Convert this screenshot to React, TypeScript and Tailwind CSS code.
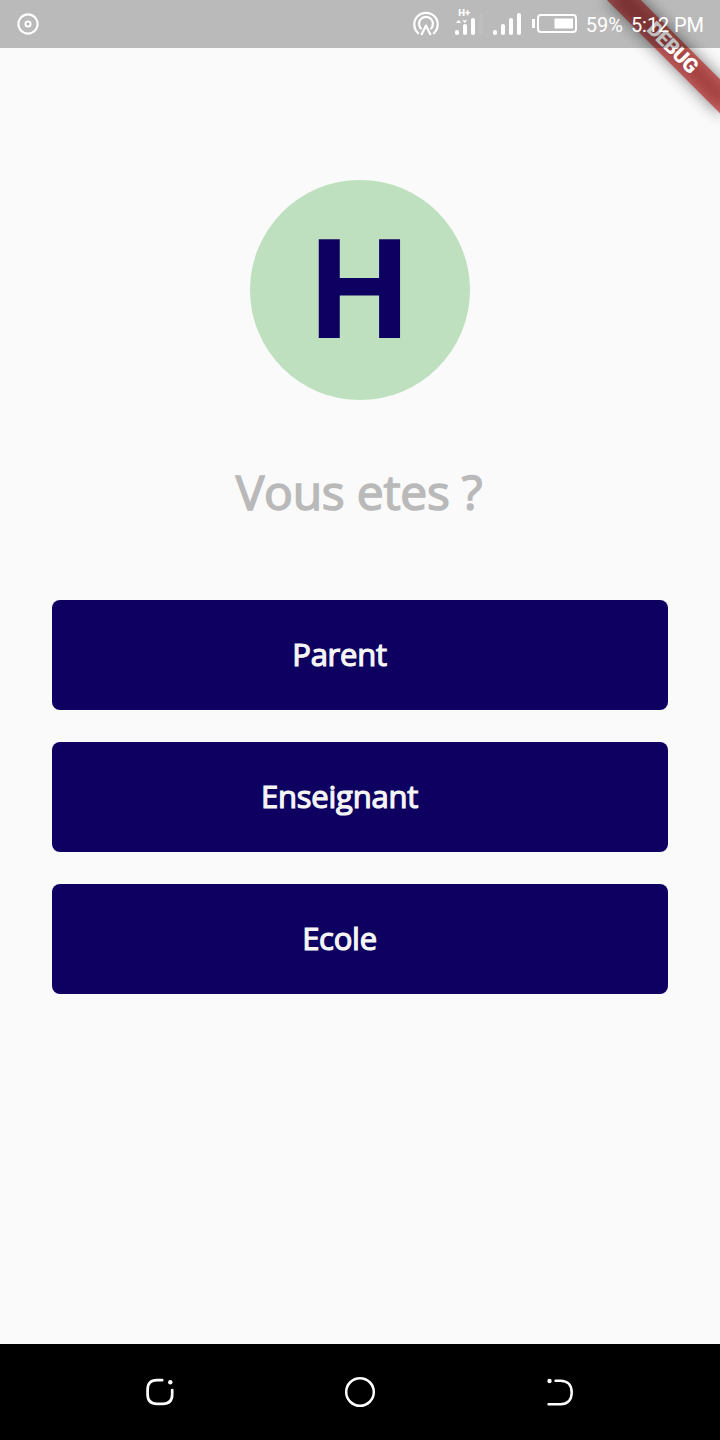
import React from "react";

const roles = [
  { label: "Parent", id: "parent" },
  { label: "Enseignant", id: "enseignant" },
  { label: "Ecole", id: "ecole" },
];

function DebugBanner() {
  return (
    <div className="pointer-events-none absolute top-0 right-0 h-40 w-40 overflow-hidden">
      <div className="absolute top-0 left-full h-0 w-0 origin-top-left rotate-45">
        <div className="absolute top-[56px] left-[-80px] h-6 w-40 bg-black/50 blur-[8px]" />
        <div className="absolute top-[56px] left-[-120px] h-6 w-60 bg-[#b71c1c]/63" />
        <div className="absolute top-[56px] left-[-80px] h-6 w-40 text-center font-[Roboto,sans-serif] text-[20.4px] leading-[23px] font-black tracking-[-0.6px] text-white">
          DEBUG
        </div>
      </div>
    </div>
  );
}

function RecordIcon() {
  return (
    <svg width="24" height="24" viewBox="0 0 24 24" fill="none" stroke="#fff">
      <circle cx="12" cy="12" r="9.6" strokeWidth="2.1" />
      <circle cx="12" cy="12" r="2.6" strokeWidth="1.9" />
    </svg>
  );
}

function HotspotIcon() {
  return (
    <svg width="28" height="28" viewBox="0 0 28 28" fill="none" stroke="#fff" strokeWidth="2.2" strokeLinecap="round">
      <path d="M6.2 23.2A11.7 11.7 0 1 1 21.8 23.2" />
      <path d="M8.9 18.4A6.9 6.9 0 1 1 19.1 18.4" />
      <path d="M9.7 24.2L14 15.6L18.3 24.2" strokeLinejoin="round" />
    </svg>
  );
}

function MobileDataIcon() {
  return (
    <svg width="30" height="30" viewBox="0 0 30 30" fill="#fff" className="overflow-visible">
      <text x="4.2" y="8" fontFamily="Roboto, sans-serif" fontSize="9.5" fontWeight="900" textLength="12">
        H+
      </text>
      <path d="M2 15L4.6 12L7.2 15ZM8.3 12.2H13.3L10.8 15Z" />
      <rect x="1" y="22" width="4" height="5" rx="1.8" />
      <rect x="9" y="16" width="4" height="11" rx="1.8" />
      <rect x="17" y="10" width="4" height="17" rx="1.8" />
      <rect x="25" y="5" width="4" height="22" rx="1.8" fillOpacity="0.08" />
    </svg>
  );
}

function SignalIcon() {
  return (
    <svg width="30" height="30" viewBox="0 0 30 30" fill="#fff">
      <rect x="1" y="22" width="4" height="5" rx="1.8" />
      <rect x="9" y="16" width="4" height="11" rx="1.8" />
      <rect x="17" y="10" width="4" height="17" rx="1.8" />
      <rect x="25" y="5" width="4" height="22" rx="1.8" />
    </svg>
  );
}

function BatteryIcon() {
  return (
    <svg width="46" height="20" viewBox="0 0 46 20" fill="none">
      <rect x="0" y="5" width="3" height="9" fill="#fff" />
      <rect x="6" y="1" width="38" height="17" rx="3" stroke="#fff" strokeWidth="2" />
      <rect x="22.5" y="4.5" width="18.5" height="10" fill="#fff" />
    </svg>
  );
}

function StatusBar() {
  return (
    <header className="relative flex h-12 items-center bg-black/[0.255] pr-4 pl-4 font-[Roboto,sans-serif] text-xl leading-6 text-white">
      <RecordIcon />
      <div className="ml-auto flex items-center">
        <HotspotIcon />
        <span className="ml-[14px] pb-[3px]">
          <MobileDataIcon />
        </span>
        <span className="ml-2 pb-[3px]">
          <SignalIcon />
        </span>
        <span className="ml-[10px] pb-px">
          <BatteryIcon />
        </span>
        <span className="ml-2 pt-0.5 whitespace-nowrap">59%</span>
        <span className="ml-2 pt-0.5 tracking-[-0.08px] whitespace-nowrap">5:12 PM</span>
      </div>
    </header>
  );
}

function NavigationBar() {
  return (
    <nav className="flex h-24 items-center justify-between bg-black px-[140px]">
      <button aria-label="Applications">
        <svg width="40" height="40" viewBox="0 0 40 40" fill="none" stroke="#fff" strokeWidth="2.7" strokeLinecap="round">
          <path d="M22.2 8.2H17C10.5 8.2 7.6 11.5 7.6 17.5V22.5C7.6 28.5 10.5 31.8 17 31.8H22.8C29 31.8 32.2 28.5 32.2 22.5V18" />
          <circle cx="30.3" cy="10.2" r="2.2" fill="#fff" stroke="none" />
        </svg>
      </button>
      <button aria-label="Accueil">
        <svg width="40" height="40" viewBox="0 0 40 40" fill="none" stroke="#fff" strokeWidth="2.5">
          <circle cx="20" cy="20" r="13.8" />
        </svg>
      </button>
      <button aria-label="Retour">
        <svg width="40" height="40" viewBox="0 0 40 40" fill="none" stroke="#fff" strokeWidth="2.5" strokeLinecap="round">
          <path d="M15.6 8.8H20.5C27.8 8.8 31.7 13.2 31.7 20.5C31.7 27.8 27.8 32.2 20.5 32.2H8.6" />
          <circle cx="9.5" cy="9" r="2.2" fill="#fff" stroke="none" />
        </svg>
      </button>
    </nav>
  );
}

export default function App() {
  return (
    <div className="relative flex h-[1440px] w-[720px] flex-col overflow-hidden bg-[#fafafa] font-['Open_Sans',sans-serif]">
      <DebugBanner />
      <StatusBar />
      <main className="flex flex-1 flex-col items-center px-[52px] pt-[132px]">
        <div className="flex h-[220px] w-[220px] items-center justify-center rounded-full bg-[#bfe0bf] pr-px pb-[12px] text-[139px] leading-none font-bold text-[#0d0060]">
          H
        </div>
        <h1 className="mt-[59px] pr-[2px] text-[48px] leading-[65px] font-normal tracking-[-0.25px] text-[#b9b9b9] [-webkit-text-stroke:1.5px_#b9b9b9]">
          Vous etes ?
        </h1>
        <div className="mt-[76px] flex w-full flex-col gap-8">
          {roles.map((role) => (
            <button
              key={role.id}
              className="flex h-[110px] w-full items-center justify-center rounded-lg bg-[#0d0060] pr-[41px] pb-[2px] text-[31px] leading-[44px] tracking-[-0.25px] text-[#f5f5f5] [-webkit-text-stroke:1.2px_#f5f5f5]"
            >
              {role.label}
            </button>
          ))}
        </div>
      </main>
      <NavigationBar />
    </div>
  );
}
